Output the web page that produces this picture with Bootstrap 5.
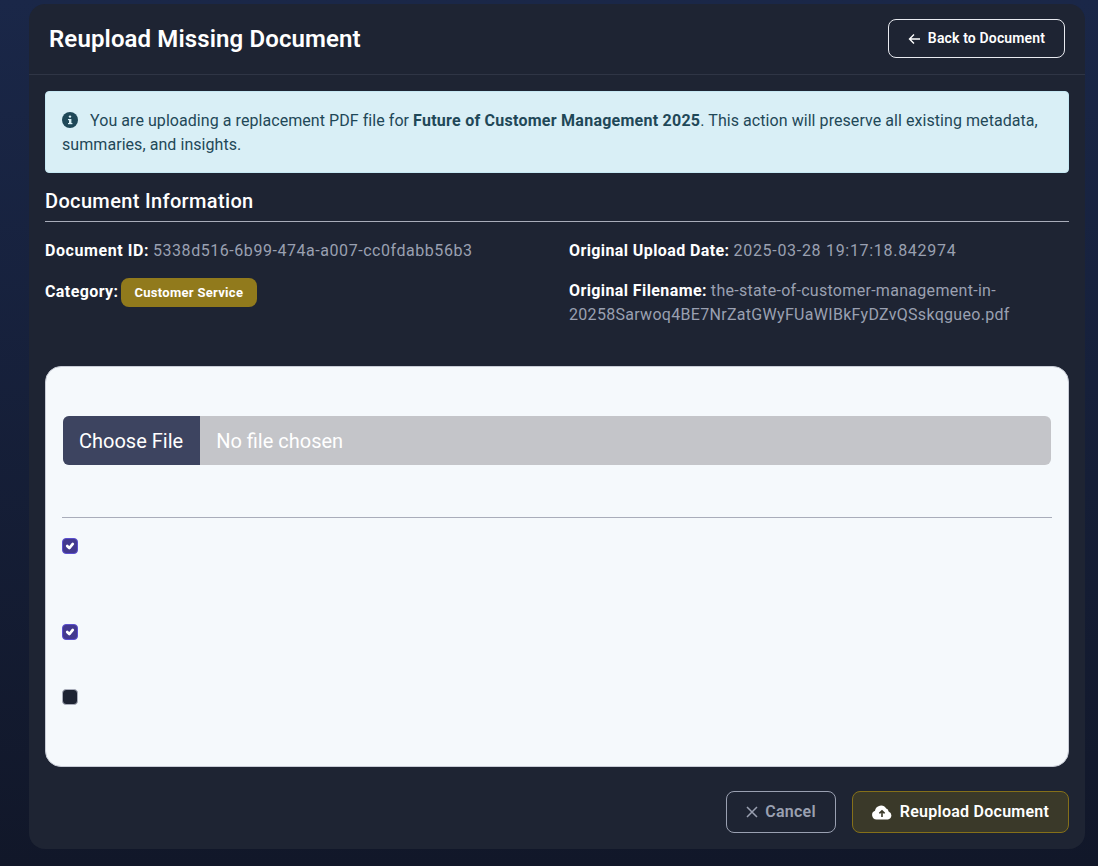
<!DOCTYPE html>
<html lang="en">
<head>
    <meta charset="UTF-8">
    <meta name="viewport" content="width=device-width, initial-scale=1.0">
    <title>Reupload Missing Document</title>
    <link href="https://cdn.jsdelivr.net/npm/bootstrap@5.3.0/dist/css/bootstrap.min.css" rel="stylesheet">
    <style>
        html, body {
            height: 100%;
        }

        body {
            font-family: "Roboto", "Liberation Sans", sans-serif;
            background: linear-gradient(180deg, #1a2748 0%, #111729 100%);
            overflow: hidden;
        }

        .page-wrap {
            padding: 4px 13px 0 29px;
        }

        .reupload-card {
            background: #1e2433;
            border: 0;
            border-radius: 16px;
            color: #fff;
            height: 845px;
        }

        .reupload-card .card-header {
            background: transparent;
            border-bottom: 1px solid #2f3545;
            flex-shrink: 0;
            height: 71px;
            padding: 0 20px;
        }

        .page-title {
            font-size: 24px;
            font-weight: 600;
            letter-spacing: .12px;
            margin: 0;
        }

        .back-btn {
            border: 1px solid #e8eaf0;
            color: #fff;
            border-radius: 8px;
            font-size: 14px;
            font-weight: 600;
            letter-spacing: .15px;
            height: 39px;
            width: 177px;
            margin-bottom: 1px;
            display: flex;
            align-items: center;
            justify-content: center;
            gap: 7px;
        }

        .reupload-card .card-body {
            padding: 16px;
        }

        .info-alert {
            background: #d9eff6;
            border: 1px solid #c6e8f3;
            color: #1f4858;
            border-radius: 4px;
            height: 82px;
            letter-spacing: .06px;
            padding: 17px 16px 0;
            margin-bottom: 16px;
        }

        .info-alert strong {
            letter-spacing: .25px;
        }

        .info-alert svg {
            margin-right: 8px;
            vertical-align: -2px;
        }

        .section-title {
            font-size: 20px;
            font-weight: 500;
            letter-spacing: .35px;
            line-height: 24px;
            padding-bottom: 8px;
            border-bottom: 1px solid #a9adba;
            margin-bottom: 17px;
        }

        .info-row p {
            margin-bottom: 16px;
            line-height: 24px;
        }

        .info-row strong {
            font-weight: 700;
            letter-spacing: .4px;
        }

        .info-row .id-label {
            letter-spacing: .57px;
        }

        .muted-val {
            color: #9aa0b1;
            letter-spacing: .3px;
        }

        .muted-val.digits-wide {
            letter-spacing: .55px;
        }

        .muted-val.date-wide {
            letter-spacing: .7px;
        }

        .cat-tag {
            display: inline-block;
            background: #917a1c;
            color: #fff;
            font-size: 13px;
            font-weight: 700;
            letter-spacing: .3px;
            line-height: 13px;
            padding: 8px 14px 8px 13px;
            border-radius: 8px;
            vertical-align: middle;
            margin: -1px 0 0 -1px;
        }

        .upload-panel {
            background: #f5f9fc;
            border: 1px solid #c8ccd6;
            border-radius: 16px;
            height: 401px;
            margin-top: 23px;
            padding: 49px 16px 0;
        }

        .upload-panel .form-control {
            background: #c4c5c9;
            border: 0;
            border-radius: 6px;
            color: #fff;
            height: 49px;
            margin-left: 1px;
            width: 988px;
            font-size: 20px;
        }

        .upload-panel .form-control::file-selector-button {
            background: #3d4460;
            color: #fff;
            border: 0;
            height: 49px;
            padding: 0 17px 0 16px;
            margin-inline-end: 16px;
        }

        .panel-line {
            border-top: 1px solid #a9adba;
            margin: 52px 0 20px;
        }

        .upload-panel .form-check-input {
            display: block;
            width: 16px;
            height: 16px;
            margin: 0;
            background-color: #1e2433;
            border: 1px solid #a9adba;
        }

        .upload-panel .form-check-input:checked {
            background-color: #43398f;
            border-color: #5b4fd0;
            background-image: url("data:image/svg+xml,%3csvg xmlns='http://www.w3.org/2000/svg' viewBox='0 0 20 20'%3e%3cpath fill='none' stroke='%23fff' stroke-linecap='round' stroke-linejoin='round' stroke-width='3.8' d='m6 10 3 3 5-6'/%3e%3c/svg%3e");
        }

        .upload-panel .check-gap-lg {
            margin-bottom: 70px;
        }

        .upload-panel .check-gap-md {
            margin-bottom: 49px;
        }

        .form-actions {
            margin-top: 24px;
        }

        .cancel-btn,
        .submit-btn {
            height: 42px;
            border-radius: 8px;
            font-weight: 600;
            letter-spacing: .25px;
            display: flex;
            align-items: center;
            justify-content: center;
        }

        .cancel-btn {
            width: 110px;
            border: 1px solid #9aa0b1;
            color: #9aa0b1;
            gap: 7px;
        }

        .submit-btn {
            width: 217px;
            background: #3a3929;
            border: 1px solid #857019;
            color: #fff;
            gap: 8px;
        }
    </style>
</head>
<body>
    <div class="page-wrap">
        <div class="card reupload-card">
            <div class="card-header d-flex justify-content-between align-items-center">
                <h1 class="page-title">Reupload Missing Document</h1>
                <a href="#" class="btn back-btn">
                    <svg width="13" height="12" viewBox="0 0 13 12" fill="none" stroke="currentColor" stroke-width="1.4"><path d="M12 6H1.5M6 1.5 1.5 6 6 10.5"/></svg>
                    Back to Document
                </a>
            </div>
            <div class="card-body">
                <div class="info-alert">
                    <svg width="16" height="16" viewBox="0 0 16 16"><circle cx="8" cy="8" r="8" fill="#1f4858"/><rect x="7" y="7" width="2.4" height="5" fill="#d9eff6"/><rect x="6" y="7" width="3" height="1.2" fill="#d9eff6"/><rect x="6" y="11" width="4.4" height="1.2" fill="#d9eff6"/><circle cx="8" cy="4.6" r="1.2" fill="#d9eff6"/></svg>
                    You are uploading a replacement PDF file for <strong>Future of Customer Management 2025</strong>. This action will preserve all existing metadata, summaries, and insights.
                </div>
                <div class="section-title">Document Information</div>
                <div class="row info-row">
                    <div class="col-6">
                        <p><strong class="id-label">Document ID:</strong> <span class="muted-val digits-wide">5338d516-6b99-474a-a007-cc0fdabb56b3</span></p>
                        <p><strong>Category:</strong> <span class="cat-tag">Customer Service</span></p>
                    </div>
                    <div class="col-6">
                        <p><strong>Original Upload Date:</strong> <span class="muted-val date-wide">2025-03-28 19:17:18.842974</span></p>
                        <p><strong>Original Filename:</strong> <span class="muted-val">the-state-of-customer-management-in-20258Sarwoq4BE7NrZatGWyFUaWIBkFyDZvQSskqgueo.pdf</span></p>
                    </div>
                </div>
                <form class="upload-panel">
                    <input class="form-control" type="file" aria-label="PDF file">
                    <div class="panel-line"></div>
                    <input class="form-check-input check-gap-lg" type="checkbox" checked aria-label="Option 1">
                    <input class="form-check-input check-gap-md" type="checkbox" checked aria-label="Option 2">
                    <input class="form-check-input" type="checkbox" aria-label="Option 3">
                </form>
                <div class="form-actions d-flex justify-content-end gap-3">
                    <a href="#" class="btn cancel-btn">
                        <svg width="12" height="12" viewBox="0 0 12 12" fill="none" stroke="currentColor" stroke-width="1.5"><path d="M1 1l10 10M11 1 1 11"/></svg>
                        Cancel
                    </a>
                    <button type="button" class="btn submit-btn">
                        <svg width="20" height="16" viewBox="0 0 20 16"><path fill="#fff" d="M4.5 15.5A4.5 4.5 0 0 1 3 6.8 6 6 0 0 1 14.2 4.6 3.4 3.4 0 0 1 16.6 7.4 4.2 4.2 0 0 1 15.8 15.5Z"/><path fill="none" stroke="#3a3929" stroke-width="1.6" d="M10 13V7M7.4 9.4 10 6.8l2.6 2.6"/></svg>
                        Reupload Document
                    </button>
                </div>
            </div>
        </div>
    </div>

    <script src="https://cdn.jsdelivr.net/npm/bootstrap@5.3.0/dist/js/bootstrap.bundle.min.js"></script>
</body>
</html>
